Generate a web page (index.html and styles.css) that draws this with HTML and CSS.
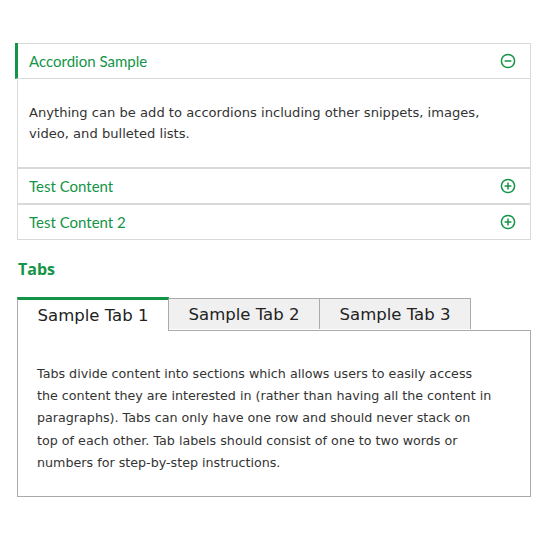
FILE: index.html
```html
<!DOCTYPE html>
<html>
<head>
<meta charset="utf-8">
<link rel="stylesheet" href="styles.css">
</head>
<body>
<div class="page">
  <div class="accordion">
    <div class="acc-item open">
      <div class="acc-head active">
        <span class="acc-title">Accordion Sample</span>
        <svg class="acc-icon" width="16" height="16" viewBox="0 0 16 16"><circle cx="8" cy="8" r="6.6" fill="none" stroke="#139447" stroke-width="1.5"/><path d="M4.6 8h6.8" stroke="#139447" stroke-width="1.5"/></svg>
      </div>
      <div class="acc-body">Anything can be add to accordions including other snippets, images, video, and bulleted lists.</div>
    </div>
    <div class="acc-item">
      <div class="acc-head">
        <span class="acc-title">Test Content</span>
        <svg class="acc-icon" width="16" height="16" viewBox="0 0 16 16"><circle cx="8" cy="8" r="6.6" fill="none" stroke="#139447" stroke-width="1.5"/><path d="M4.6 8h6.8M8 4.6v6.8" stroke="#139447" stroke-width="1.5"/></svg>
      </div>
    </div>
    <div class="acc-item">
      <div class="acc-head">
        <span class="acc-title">Test Content 2</span>
        <svg class="acc-icon" width="16" height="16" viewBox="0 0 16 16"><circle cx="8" cy="8" r="6.6" fill="none" stroke="#139447" stroke-width="1.5"/><path d="M4.6 8h6.8M8 4.6v6.8" stroke="#139447" stroke-width="1.5"/></svg>
      </div>
    </div>
  </div>

  <h2 class="section-title">Tabs</h2>

  <div class="tabs">
    <div class="tab-row">
      <div class="tab current">Sample Tab 1</div>
      <div class="tab">Sample Tab 2</div>
      <div class="tab">Sample Tab 3</div>
    </div>
    <div class="tab-panel">Tabs divide content into sections which allows users to easily access the content they are interested in (rather than having all the content in paragraphs). Tabs can only have one row and should never stack on top of each other. Tab labels should consist of one to two words or numbers for step-by-step instructions.</div>
  </div>
</div>
</body>
</html>
```

FILE: styles.css
```css
html, body {
  margin: 0;
  padding: 0;
  background: #fff;
}
.page {
  padding: 43px 19px 0 17px;
  width: 514px;
}
.accordion {
  display: flex;
  flex-direction: column;
}
.acc-item {
  border: 1px solid #d9d9d9;
}
.acc-head {
  height: 34px;
  display: flex;
  align-items: center;
  justify-content: space-between;
  padding: 0 14px 0 11px;
}
.acc-head.active {
  border-left: 3px solid #139447;
  margin-left: -3px;
  margin-top: -1px;
  padding-top: 1px;
  border-bottom: 1px solid #d9d9d9;
}
.acc-title {
  font-family: Lato, "Open Sans", sans-serif;
  font-size: 15px;
  color: #139447;
}
.acc-icon {
  display: block;
}
.acc-body {
  font-family: "DejaVu Sans", Verdana, sans-serif;
  font-size: 13.1px;
  line-height: 21px;
  color: #333;
  padding: 23px 20px 23px 11px;
}
.section-title {
  margin: 18px 0 17px 1px;
  font-family: "Open Sans", sans-serif;
  font-weight: 700;
  font-size: 16px;
  line-height: 22px;
  color: #139447;
}
.tab-row {
  display: flex;
  align-items: flex-start;
}
.tab {
  width: 151px;
  height: 31px;
  margin-top: 1px;
  box-sizing: border-box;
  border: 1px solid #aaa;
  border-bottom: none;
  border-left: none;
  background: #f0f0f0;
  font-family: "DejaVu Sans", Verdana, sans-serif;
  font-size: 16.5px;
  color: #222;
  display: flex;
  align-items: center;
  justify-content: center;
}
.tab.current {
  width: 152px;
  height: 34px;
  margin-top: 0;
  margin-bottom: -1px;
  border-top: 3px solid #139447;
  border-left: 1px solid #aaa;
  border-right: 1px solid #aaa;
  background: #fff;
  position: relative;
  z-index: 1;
}
.tab-panel {
  border: 1px solid #aaa;
  padding: 32px 35px 22px 19px;
  font-family: "DejaVu Sans", Verdana, sans-serif;
  font-size: 12.7px;
  line-height: 22.2px;
  color: #333;
}
```
